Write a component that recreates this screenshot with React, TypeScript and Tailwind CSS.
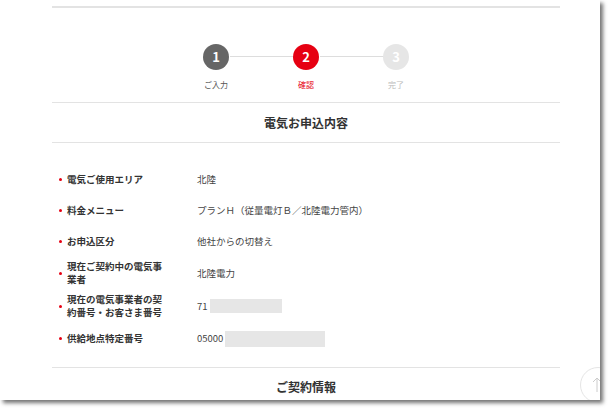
export default function App() {
  const rows: [string, React.ReactNode][] = [
    ["電気ご使用エリア", "北陸"],
    ["料金メニュー", "プランＨ（従量電灯Ｂ／北陸電力管内）"],
    ["お申込区分", "他社からの切替え"],
    ["現在ご契約中の電気事業者", "北陸電力"],
    ["現在の電気事業者の契約番号・お客さま番号", <span className="flex items-center">71<span className="ml-[2px] inline-block h-[14px] w-[72px] bg-[#e6e6e6]" /></span>],
    ["供給地点特定番号", <span className="flex items-center">05000<span className="ml-[2px] inline-block h-[16px] w-[100px] bg-[#e6e6e6]" /></span>],
  ];
  const heights = [31, 31, 31, 32, 34, 31];
  return (
    <div className="h-[408px] w-[608px] bg-white" style={{ fontFamily: '"Noto Sans CJK JP", "Noto Sans", sans-serif' }}>
      <div className="relative h-[400px] w-[600px] overflow-hidden bg-white shadow-[3px_3px_4px_rgba(0,0,0,0.55)]">
        <div className="ml-[52px] w-[508px] pt-[6px]">
          <div className="h-[2px] bg-[#e3e3e3]" />
          <div className="flex justify-center pt-[36px]">
            <div className="flex w-[240px] items-start justify-between">
              {[
                ["1", "ご入力", "bg-[#666]", "text-[#555]"],
                ["2", "確認", "bg-[#e60012]", "text-[#e60012]"],
                ["3", "完了", "bg-[#e6e6e6]", "text-[#bbb]"],
              ].map(([n, l, bg, tc], i) => (
                <div key={n} className="relative flex w-[60px] flex-col items-center">
                  <div className={`flex h-[26px] w-[26px] items-center justify-center rounded-full text-[13px] font-bold text-white ${bg}`}>{n}</div>
                  <div className={`mt-[11px] text-[8px] leading-none ${tc}`}>{l}</div>
                  {i < 2 && <div className="absolute left-[44px] top-[12px] h-[1px] w-[64px] bg-[#ddd]" />}
                </div>
              ))}
            </div>
          </div>
          <div className="mt-[13px] h-[1px] bg-[#e3e3e3]" />
          <div className="flex h-[39px] items-center justify-center text-[12px] font-bold text-[#333]">電気お申込内容</div>
          <div className="h-[1px] bg-[#e3e3e3]" />
          <div className="pt-[21px]">
            {rows.map(([k, v], i) => (
              <div key={i} className="flex items-center" style={{ height: heights[i] }}>
                <div className="flex w-[145px] items-center pl-[7px]">
                  <span className="mr-[5px] h-[3px] w-[3px] shrink-0 rounded-full bg-[#e60012]" />
                  <span className="w-[96px] text-[9.5px] font-bold leading-[13px] text-[#333]">{k}</span>
                </div>
                <div className="text-[9.5px] text-[#444]">{v}</div>
              </div>
            ))}
          </div>
          <div className="mt-[13px] h-[1px] bg-[#e3e3e3]" />
          <div className="flex h-[38px] items-center justify-center text-[12px] font-bold text-[#333]">ご契約情報</div>
        </div>
        <div className="absolute left-[580px] top-[367px] h-[36px] w-[36px] rounded-full border border-[#e5e5e5] bg-white">
          <svg className="absolute left-[10px] top-[9px]" width="12" height="16" viewBox="0 0 12 16" fill="none" stroke="#ccc" strokeWidth="1">
            <path d="M6 15V1M2 5l4-4 4 4" />
          </svg>
        </div>
      </div>
    </div>
  );
}
